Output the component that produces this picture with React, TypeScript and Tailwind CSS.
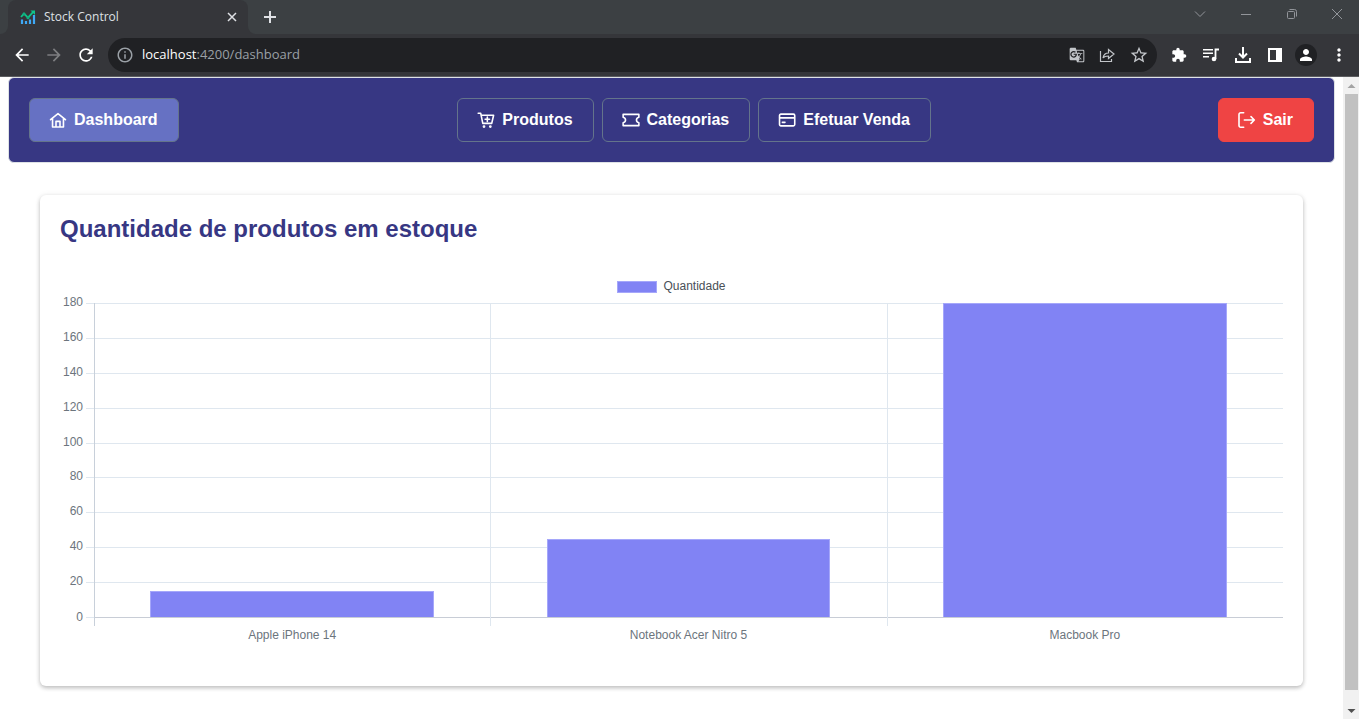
import type { ReactNode } from "react";
import {
  MdArrowBack,
  MdArrowForward,
  MdExtension,
  MdGTranslate,
  MdInfoOutline,
  MdMoreVert,
  MdPerson,
  MdRefresh,
  MdStarBorder,
} from "react-icons/md";

type Product = { name: string; amount: number };

const products: Product[] = [
  { name: "Apple iPhone 14", amount: 15 },
  { name: "Notebook Acer Nitro 5", amount: 45 },
  { name: "Macbook Pro", amount: 180 },
];
const maxAmount = 180;
const steps = [180, 160, 140, 120, 100, 80, 60, 40, 20];

function Icon({ children }: { children: ReactNode }) {
  return (
    <svg
      viewBox="0 0 24 24"
      className="size-4 shrink-0 overflow-visible"
      fill="none"
      stroke="currentColor"
      strokeWidth="2.4"
      strokeLinecap="round"
      strokeLinejoin="round"
      aria-hidden="true"
    >
      {children}
    </svg>
  );
}

const HomeIcon = () => (
  <Icon>
    <path d="M.8 11.500 12 2.500l11.200 9M3.800 9.500V22.500h16.400V9.500M9 22.500v-8.500h6v8.500" />
  </Icon>
);

const CartIcon = () => (
  <Icon>
    <path d="M.3 1.800h3.700L7.200 17H20.500M4.800 4.800h18.600l-2.800 12.200M14 7.600v6.600M10.700 10.900h6.600" />
    <circle cx="9" cy="21.800" r=".9" fill="currentColor" />
    <circle cx="18.500" cy="21.800" r=".9" fill="currentColor" />
  </Icon>
);

const TicketIcon = () => (
  <Icon>
    <path d="M.2 3.500h23.600v4.500c-2.200.4-3.600 2-3.600 4s1.400 3.600 3.600 4v4.500H.2V16c2.200-.4 3.600-2 3.600-4S2.400 8.400.2 8Z" />
  </Icon>
);

const CardIcon = () => (
  <Icon>
    <rect x=".8" y="3.200" width="22.800" height="17.600" rx="2" />
    <path d="M1 8.800h22M5 15.500h4" />
  </Icon>
);

const SignOutIcon = () => (
  <Icon>
    <path d="M7 1.200H2.500a2.500 2.500 0 0 0-2.500 2.500v16.600a2.500 2.500 0 0 0 2.500 2.500H7M8 12h15M18 7l5 5-5 5" />
  </Icon>
);

function NavButton({ icon, label, className }: { icon: ReactNode; label: string; className: string }) {
  return (
    <button
      type="button"
      className={`flex h-11 items-center gap-2 rounded-md border px-5 text-base font-bold text-white ${className}`}
    >
      {icon}
      <span>{label}</span>
    </button>
  );
}

function TabStrip() {
  return (
    <div className="flex h-[34px] items-stretch bg-[#3c4043] text-[#dfe1e5]">
      <div className="flex w-2 bg-[#35363a]">
        <div className="flex-1 rounded-br-lg bg-[#3c4043]" />
      </div>
      <div className="flex w-60 items-center gap-2 rounded-t-lg bg-[#35363a] pr-2.5 pl-3">
        <svg viewBox="0 0 16 16" className="size-4 shrink-0" fill="none" aria-hidden="true">
          <path d="M2 10.5V15M6 12v3M10 10.5V15M14 6v9" stroke="#3fa9f5" strokeWidth="2.2" />
          <path d="m1 8 3-3.400 4 4 5-5.400" stroke="#0fc48a" strokeWidth="1.800" />
          <path d="M10.500 1.500H15V6Z" fill="#0fc48a" />
          <circle cx="4" cy="5" r="1.500" fill="#0fae7f" />
          <circle cx="8" cy="8.800" r="1.500" fill="#0fae7f" />
        </svg>
        <span className="flex-1 text-xs">Stock Control</span>
        <button type="button" aria-label="Close tab" className="flex size-3 items-center justify-center">
          <svg viewBox="0 0 10 10" className="size-2.5" stroke="currentColor" strokeWidth="1.5">
            <path d="m1 1 8 8M9 1 1 9" />
          </svg>
        </button>
      </div>
      <div className="flex w-2 bg-[#35363a]">
        <div className="flex-1 rounded-bl-lg bg-[#3c4043]" />
      </div>
      <button type="button" aria-label="New tab" className="flex w-7 items-center justify-center">
        <svg viewBox="0 0 12 12" className="size-3" stroke="currentColor" strokeWidth="2">
          <path d="M6 0v12M0 6h12" />
        </svg>
      </button>
      <div className="ml-auto flex pb-1.5 text-[#92959a]">
        <button type="button" aria-label="Search tabs" className="flex w-[46px] items-center justify-center">
          <svg viewBox="0 0 12 12" className="size-3" fill="none" stroke="currentColor">
            <path d="m1 3.500 5 5 5-5" />
          </svg>
        </button>
        <button type="button" aria-label="Minimize" className="flex w-[46px] items-center justify-center">
          <svg viewBox="0 0 12 12" className="size-3" fill="none" stroke="currentColor">
            <path d="M1 6.500h10" />
          </svg>
        </button>
        <button type="button" aria-label="Restore" className="flex w-[46px] items-center justify-center">
          <svg viewBox="0 0 12 12" className="size-3" fill="none" stroke="currentColor">
            <rect x="1.500" y="3.500" width="7" height="7" rx="1" />
            <path d="M3.500 1.500h5a2 2 0 0 1 2 2v5" />
          </svg>
        </button>
        <button type="button" aria-label="Close window" className="flex w-11 items-center justify-center">
          <svg viewBox="0 0 12 12" className="size-3" fill="none" stroke="currentColor">
            <path d="m1 1 10 10M11 1 1 11" />
          </svg>
        </button>
      </div>
    </div>
  );
}

function AddressBar() {
  return (
    <div className="flex h-[43px] items-center border-b border-[#5c5d60] bg-[#35363a] pr-2.5 text-white">
      <div className="flex w-[108px] items-center gap-3 pl-3">
        <button type="button" aria-label="Back">
          <MdArrowBack className="size-5" />
        </button>
        <button type="button" aria-label="Forward" className="text-[#7d7e81]">
          <MdArrowForward className="size-5" />
        </button>
        <button type="button" aria-label="Reload">
          <MdRefresh className="size-5" />
        </button>
      </div>
      <div className="flex h-[34px] flex-1 items-center rounded-full bg-[#202124] px-2 text-[#9aa0a6]">
        <MdInfoOutline className="size-[18px]" />
        <span className="ml-2 flex-1 text-[13px]">
          <span className="text-white">localhost</span>:4200/dashboard
        </span>
        <div className="flex items-center gap-3.5 text-[#c2c5c9]">
          <button type="button" aria-label="Translate">
            <MdGTranslate className="size-4" />
          </button>
          <button type="button" aria-label="Share">
            <svg viewBox="0 0 16 16" className="size-4" fill="none" stroke="currentColor" strokeWidth="1.200">
              <path d="M1.500 4v10.500h11V12" />
              <path d="M4 11c.6-3.400 2.500-5 5.500-5V2.500l5.500 4.500-5.500 4.500V9C7 9 5.200 9.400 4 11Z" />
            </svg>
          </button>
          <button type="button" aria-label="Bookmark">
            <MdStarBorder className="size-5" />
          </button>
        </div>
      </div>
      <div className="ml-3.5 flex items-center gap-4">
        <button type="button" aria-label="Extensions">
          <MdExtension className="size-4" />
        </button>
        <button type="button" aria-label="Media controls">
          <svg viewBox="0 0 16 16" className="size-4" fill="none" stroke="currentColor" strokeWidth="1.500">
            <path d="M0 2.800h10M0 6.300h10M0 9.800h6" />
            <path d="M12.500 12V2.500H16" strokeWidth="1.800" />
            <circle cx="11" cy="12" r="2.300" fill="currentColor" stroke="none" />
          </svg>
        </button>
        <button type="button" aria-label="Downloads">
          <svg viewBox="0 0 16 16" className="size-4" fill="none" stroke="currentColor" strokeWidth="2">
            <path d="M8 0v10M4 6.500l4 4 4-4M1 11v4h14v-4" />
          </svg>
        </button>
        <button type="button" aria-label="Side panel">
          <svg viewBox="0 0 16 16" className="size-4" fill="none" stroke="currentColor" strokeWidth="2">
            <path d="M2 2h12v12H2Z" />
            <path d="M10 2h4v12h-4Z" fill="currentColor" />
          </svg>
        </button>
        <div className="-ml-1 flex items-center gap-3">
          <button
            type="button"
            aria-label="Profile"
            className="flex size-[22px] items-center justify-center rounded-full bg-[#202124]"
          >
            <MdPerson className="size-[18px]" />
          </button>
          <button type="button" aria-label="Menu">
            <MdMoreVert className="size-5" />
          </button>
        </div>
      </div>
    </div>
  );
}

function Toolbar() {
  return (
    <nav className="flex items-center justify-between rounded-md border border-[#dee2e6] bg-[#373783] p-5">
      <NavButton icon={<HomeIcon />} label="Dashboard" className="border-[#64748b] bg-[#6671c3]" />
      <div className="flex">
        <NavButton icon={<CartIcon />} label="Produtos" className="mr-2 border-[#64748b]" />
        <NavButton icon={<TicketIcon />} label="Categorias" className="mr-2 border-[#64748b]" />
        <NavButton icon={<CardIcon />} label="Efetuar Venda" className="mr-2 border-[#64748b]" />
      </div>
      <NavButton icon={<SignOutIcon />} label="Sair" className="border-[#ef4444] bg-[#ef4444]" />
    </nav>
  );
}

function Chart() {
  return (
    <figure className="mt-[35px] text-xs text-[#6c757d]">
      <figcaption className="flex items-center justify-center gap-1.5 text-[#495057]">
        <span className="mt-0.5 h-3 w-10 border border-[#a5a7fa] bg-[#8183f4]" />
        <span>Quantidade</span>
      </figcaption>
      <div className="mt-[9px] flex">
        <div className="flex h-[314px] w-[23px] flex-col text-right">
          {steps.map((step) => (
            <span key={step} className="flex-1 leading-none">
              <span className="-mt-[7px] block">{step}</span>
            </span>
          ))}
          <span className="-mt-1.5 -mb-1.5 leading-none">0</span>
        </div>
        <div className="ml-[3px] grid flex-1">
          <div className="flex h-[315px] flex-col border-b border-[#dfe7ef] [grid-area:1/1]">
            {steps.map((step) => (
              <div key={step} className="flex-1 border-t border-[#dfe7ef]" />
            ))}
          </div>
          <div className="ml-2 grid grid-cols-3 [grid-area:1/1]">
            {products.map((product) => (
              <div key={product.name} className="border-l border-[#dfe7ef] first:border-[#c8d0da]">
                <div className="flex h-[315px] items-end justify-center border-b border-[#c8cdd6] pr-px">
                  <div
                    className="w-[72%] border border-b-0 border-[#a5a7fa] bg-[#8183f4]"
                    style={{ height: `${(product.amount / maxAmount) * 100}%` }}
                  />
                </div>
                <div className="h-2" />
              </div>
            ))}
          </div>
        </div>
      </div>
      <div className="mt-px ml-[34px] grid grid-cols-3 text-center">
        {products.map((product) => (
          <span key={product.name}>{product.name}</span>
        ))}
      </div>
    </figure>
  );
}

function Scrollbar() {
  return (
    <div className="flex w-4 shrink-0 flex-col bg-[#f1f1f1]" aria-hidden="true">
      <svg viewBox="0 0 16 17" className="h-[17px] w-4">
        <path d="m4.500 11 4-4 4 4Z" fill="#a3a3a3" />
      </svg>
      <div className="ml-0.5 w-[13px] flex-1 bg-[#c1c1c1]" />
      <svg viewBox="0 0 16 29" className="h-[29px] w-4">
        <path d="m4.500 19 4 4 4-4Z" fill="#505050" />
      </svg>
    </div>
  );
}

export default function App() {
  return (
    <div className="flex h-screen flex-col bg-white">
      <header className="shrink-0 font-['Open_Sans',sans-serif]">
        <TabStrip />
        <AddressBar />
      </header>
      <div className="flex min-h-0 flex-1 font-['Liberation_Sans',Arial,sans-serif]">
        <div className="min-w-0 flex-1 overflow-hidden px-2">
          <Toolbar />
          <main className="px-8 pt-8">
            <section className="rounded-md bg-white px-5 pt-5 pb-[43px] shadow-[0_2px_4px_0_rgba(0,0,0,0.24),0_0_6px_0_rgba(0,0,0,0.06)]">
              <h1 className="text-2xl leading-7 font-bold text-[#373783]">Quantidade de produtos em estoque</h1>
              <Chart />
            </section>
          </main>
        </div>
        <Scrollbar />
      </div>
    </div>
  );
}
